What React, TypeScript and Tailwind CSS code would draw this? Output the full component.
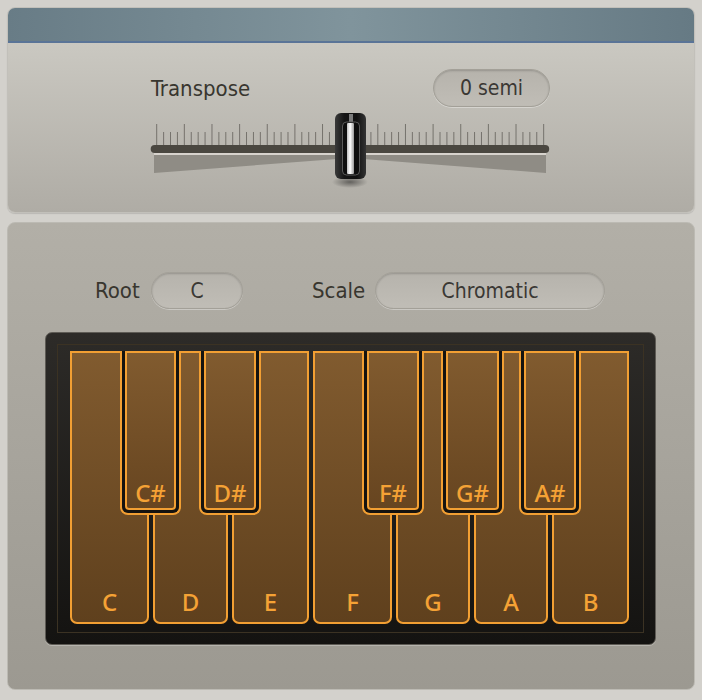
import React from 'react';

const labelFont = { fontFamily: '"DejaVu Sans Condensed", "Liberation Sans Narrow", "DejaVu Sans", sans-serif' };
const keyFont = { fontFamily: '"Noto Sans", "DejaVu Sans", sans-serif' };

const whiteKeys = [
    { note: 'C', w: 'w-[79px]' },
    { note: 'D', w: 'w-[75px]' },
    { note: 'E', w: 'w-[77px]' },
    { note: 'F', w: 'w-[79px]' },
    { note: 'G', w: 'w-[74px]' },
    { note: 'A', w: 'w-[74px]' },
    { note: 'B', w: 'w-[77px]' },
];

const blackKeys = [
    { note: 'C#', pos: 'left-[50px] w-[61px]' },
    { note: 'D#', pos: 'left-[129px] w-[62px]' },
    { note: 'F#', pos: 'left-[292px] w-[62px]' },
    { note: 'G#', pos: 'left-[371px] w-[63px]' },
    { note: 'A#', pos: 'left-[449px] w-[62px]' },
];

const Pill = ({ text, className = '' }: { text: string; className?: string }) => (
    <div
        className={`h-[37px] rounded-full border border-[#a3a098] bg-linear-to-b from-[#b6b3ac] to-[#c0bdb6] shadow-[inset_0_1px_2px_rgba(0,0,0,0.18),0_1px_0_rgba(255,255,255,0.35)] flex items-center justify-center pt-[2px] text-[21px] text-[#3a3834] ${className}`}
        style={labelFont}
    >
        {text}
    </div>
);

const TransposeSlider = () => {
    const ticks = [];
    for (let i = 0; i <= 56; i++) {
        const x = 8.7 + i * 6.91;
        const major = i % 4 === 0;
        ticks.push(
            <line key={i} x1={x} x2={x} y1={major ? 14 : 22} y2={35} stroke="#75726c" strokeWidth={1} />
        );
    }
    return (
        <svg width="404" height="80" viewBox="0 0 404 80" className="block">
            <defs>
                <linearGradient id="knobBody" x1="0" x2="1" y1="0" y2="0">
                    <stop offset="0" stopColor="#3a3a3a" />
                    <stop offset="0.3" stopColor="#151515" />
                    <stop offset="0.7" stopColor="#111" />
                    <stop offset="1" stopColor="#333" />
                </linearGradient>
                <linearGradient id="stripe" x1="0" x2="1" y1="0" y2="0">
                    <stop offset="0" stopColor="#bdbdbd" />
                    <stop offset="0.45" stopColor="#ffffff" />
                    <stop offset="1" stopColor="#9a9a9a" />
                </linearGradient>
                <radialGradient id="knobShadow">
                    <stop offset="0" stopColor="rgba(0,0,0,0.45)" />
                    <stop offset="1" stopColor="rgba(0,0,0,0)" />
                </radialGradient>
            </defs>
            {ticks}
            <rect x="2.7" y="35" width="398.5" height="8" rx="4" fill="#4a4740" />
            <rect x="6" y="43" width="392" height="2" fill="#dedbd5" opacity="0.8" />
            <polygon points="6,45 398,45 398,63 202,48 6,63" fill="#8f8c85" />
            <ellipse cx="202" cy="72" rx="18" ry="6" fill="url(#knobShadow)" />
            <rect x="187" y="3" width="31" height="66" rx="6" fill="url(#knobBody)" />
            <rect x="201" y="4" width="4" height="9" fill="#7a7a7a" />
            <rect x="194.5" y="12" width="17" height="53" rx="4" fill="#0e0e0e" stroke="#5a5a5a" strokeWidth="1" />
            <rect x="199" y="13" width="7" height="51" rx="1" fill="url(#stripe)" />
        </svg>
    );
};

const Keyboard = () => (
    <div className="w-[611px] h-[313px] ml-[37px] rounded-[7px] border border-[#5e5b55] bg-linear-to-b from-[#2d2b28] to-[#141311] shadow-[0_1px_0_rgba(255,255,255,0.25)] p-[11px]">
        <div className="w-full h-full border border-[#3b3223] pt-[6px] pl-[12px]">
            <div className="relative flex gap-[4px] h-[273px]">
                {whiteKeys.map((k) => (
                    <div
                        key={k.note}
                        className={`${k.w} h-full border-2 border-[#f29f33] rounded-b-[7px] bg-linear-to-b from-[#815b2f] to-[#5f401d] flex items-end justify-center pb-[6px]`}
                    >
                        <span className="text-[24px] leading-[28px] font-medium text-[#f5a235]" style={keyFont}>
                            {k.note}
                        </span>
                    </div>
                ))}
                {blackKeys.map((k) => (
                    <div
                        key={k.note}
                        className={`absolute top-0 ${k.pos} h-[164px] border-2 border-t-0 border-[#f29f33] rounded-b-[8px] bg-[#151310] px-[3px] pb-[3px]`}
                    >
                        <div className="w-full h-full border-2 border-[#f29f33] rounded-b-[4px] bg-linear-to-b from-[#815b2f] to-[#674520] flex items-end justify-center pb-[1px]">
                            <span className="text-[24px] leading-[28px] font-medium text-[#f5a235]" style={keyFont}>
                                {k.note}
                            </span>
                        </div>
                    </div>
                ))}
            </div>
        </div>
    </div>
);

export default function App() {
    return (
        <div className="w-[702px] h-[700px] bg-[#d3d1cc] p-[7px] pb-[10px] flex flex-col gap-[9px]">
            <div className="h-[206px] rounded-[8px] overflow-hidden flex flex-col border border-[#c2c0ba] shadow-[0_1px_1px_rgba(0,0,0,0.12)]">
                <div className="h-[35px] bg-linear-to-r from-[#687c86] via-[#80949c] to-[#667a84] border-b-2 border-[#5a7497]" />
                <div className="flex-1 bg-linear-to-b from-[#cac8c1] to-[#afaca5] pt-[26px]">
                    <div className="flex items-center justify-between pl-[143px] pr-[144px]">
                        <span className="text-[22px] text-[#38362f]" style={labelFont}>Transpose</span>
                        <Pill text="0 semi" className="w-[117px] h-[38px]" />
                    </div>
                    <div className="ml-[140px] mt-[3px]">
                        <TransposeSlider />
                    </div>
                </div>
            </div>
            <div className="flex-1 rounded-[8px] border border-[#bcbab3] bg-linear-to-b from-[#b2afa7] to-[#9c9991] pt-[49px]">
                <div className="flex items-center ml-[87px]">
                    <span className="w-[46px] text-[22px] text-[#38362f]" style={labelFont}>Root</span>
                    <Pill text="C" className="w-[92px] ml-[10px]" />
                    <span className="w-[55px] text-[22px] text-[#38362f] ml-[69px]" style={labelFont}>Scale</span>
                    <Pill text="Chromatic" className="w-[230px] ml-[8px]" />
                </div>
                <div className="mt-[23px]">
                    <Keyboard />
                </div>
            </div>
        </div>
    );
}
